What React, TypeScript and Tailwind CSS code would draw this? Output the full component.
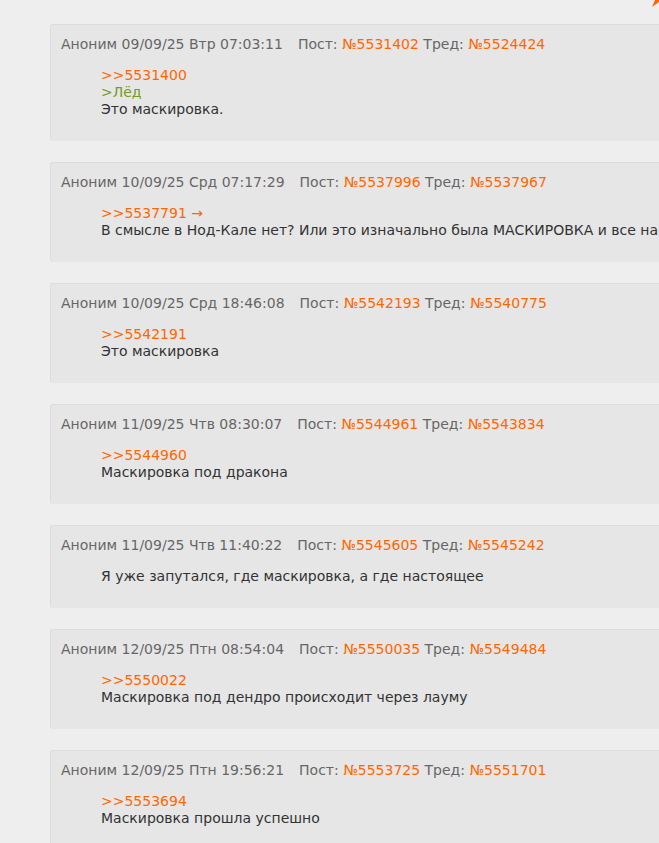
import React from 'react';

type Post = {
  date: string;
  num: string;
  thread: string;
  lines: { kind: 'ref' | 'quote' | 'text'; text: string }[];
};

const POSTS: Post[] = [
  {
    date: '09/09/25 Втр 07:03:11',
    num: '5531402',
    thread: '5524424',
    lines: [
      { kind: 'ref', text: '>>5531400' },
      { kind: 'quote', text: '>Лёд' },
      { kind: 'text', text: 'Это маскировка.' },
    ],
  },
  {
    date: '10/09/25 Срд 07:17:29',
    num: '5537996',
    thread: '5537967',
    lines: [
      { kind: 'ref', text: '>>5537791 →' },
      { kind: 'text', text: 'В смысле в Нод-Кале нет? Или это изначально была МАСКИРОВКА и все наши' },
    ],
  },
  {
    date: '10/09/25 Срд 18:46:08',
    num: '5542193',
    thread: '5540775',
    lines: [
      { kind: 'ref', text: '>>5542191' },
      { kind: 'text', text: 'Это маскировка' },
    ],
  },
  {
    date: '11/09/25 Чтв 08:30:07',
    num: '5544961',
    thread: '5543834',
    lines: [
      { kind: 'ref', text: '>>5544960' },
      { kind: 'text', text: 'Маскировка под дракона' },
    ],
  },
  {
    date: '11/09/25 Чтв 11:40:22',
    num: '5545605',
    thread: '5545242',
    lines: [{ kind: 'text', text: 'Я уже запутался, где маскировка, а где настоящее' }],
  },
  {
    date: '12/09/25 Птн 08:54:04',
    num: '5550035',
    thread: '5549484',
    lines: [
      { kind: 'ref', text: '>>5550022' },
      { kind: 'text', text: 'Маскировка под дендро происходит через лауму' },
    ],
  },
  {
    date: '12/09/25 Птн 19:56:21',
    num: '5553725',
    thread: '5551701',
    lines: [
      { kind: 'ref', text: '>>5553694' },
      { kind: 'text', text: 'Маскировка прошла успешно' },
    ],
  },
];

const LINE_COLOR = {
  ref: 'text-[#ff6600]',
  quote: 'text-[#789922]',
  text: 'text-[#333333]',
};

function PostBox({ post }: { post: Post }) {
  return (
    <div className="w-[760px] shrink-0 bg-[#e6e6e6] border-t border-l border-[#dcdcdc] rounded-[3px] pt-[11px] pb-[23px]">
      <div className="pl-[10px] text-[#666666] leading-[17px] whitespace-nowrap">
        Аноним {post.date}
        <span className="ml-[15px]">Пост: </span>
        <span className="text-[#ff6600]">№{post.num}</span> Тред:{' '}
        <span className="text-[#ff6600]">№{post.thread}</span>
      </div>
      <div className="mt-[14px] pl-[50px] leading-[17px]">
        {post.lines.map((l, i) => (
          <div key={i} className={`${LINE_COLOR[l.kind]} whitespace-nowrap`}>
            {l.text}
          </div>
        ))}
      </div>
    </div>
  );
}

export default function App() {
  return (
    <div
      className="relative h-[843px] w-[659px] overflow-hidden bg-[#eeeeee] text-[14px]"
      style={{ fontFamily: '"DejaVu Sans", Verdana, sans-serif' }}
    >
      {/* corner icon fragment */}
      <svg className="absolute right-0 top-0" width="8" height="8" viewBox="0 0 8 8">
        <path d="M8 0 L4 0 L1 7 L8 2 Z" fill="#ff6600" />
      </svg>
      <div className="flex flex-col gap-[21px] pl-[50px] pt-[24px]">
        {POSTS.map((p) => (
          <PostBox key={p.num} post={p} />
        ))}
      </div>
    </div>
  );
}
